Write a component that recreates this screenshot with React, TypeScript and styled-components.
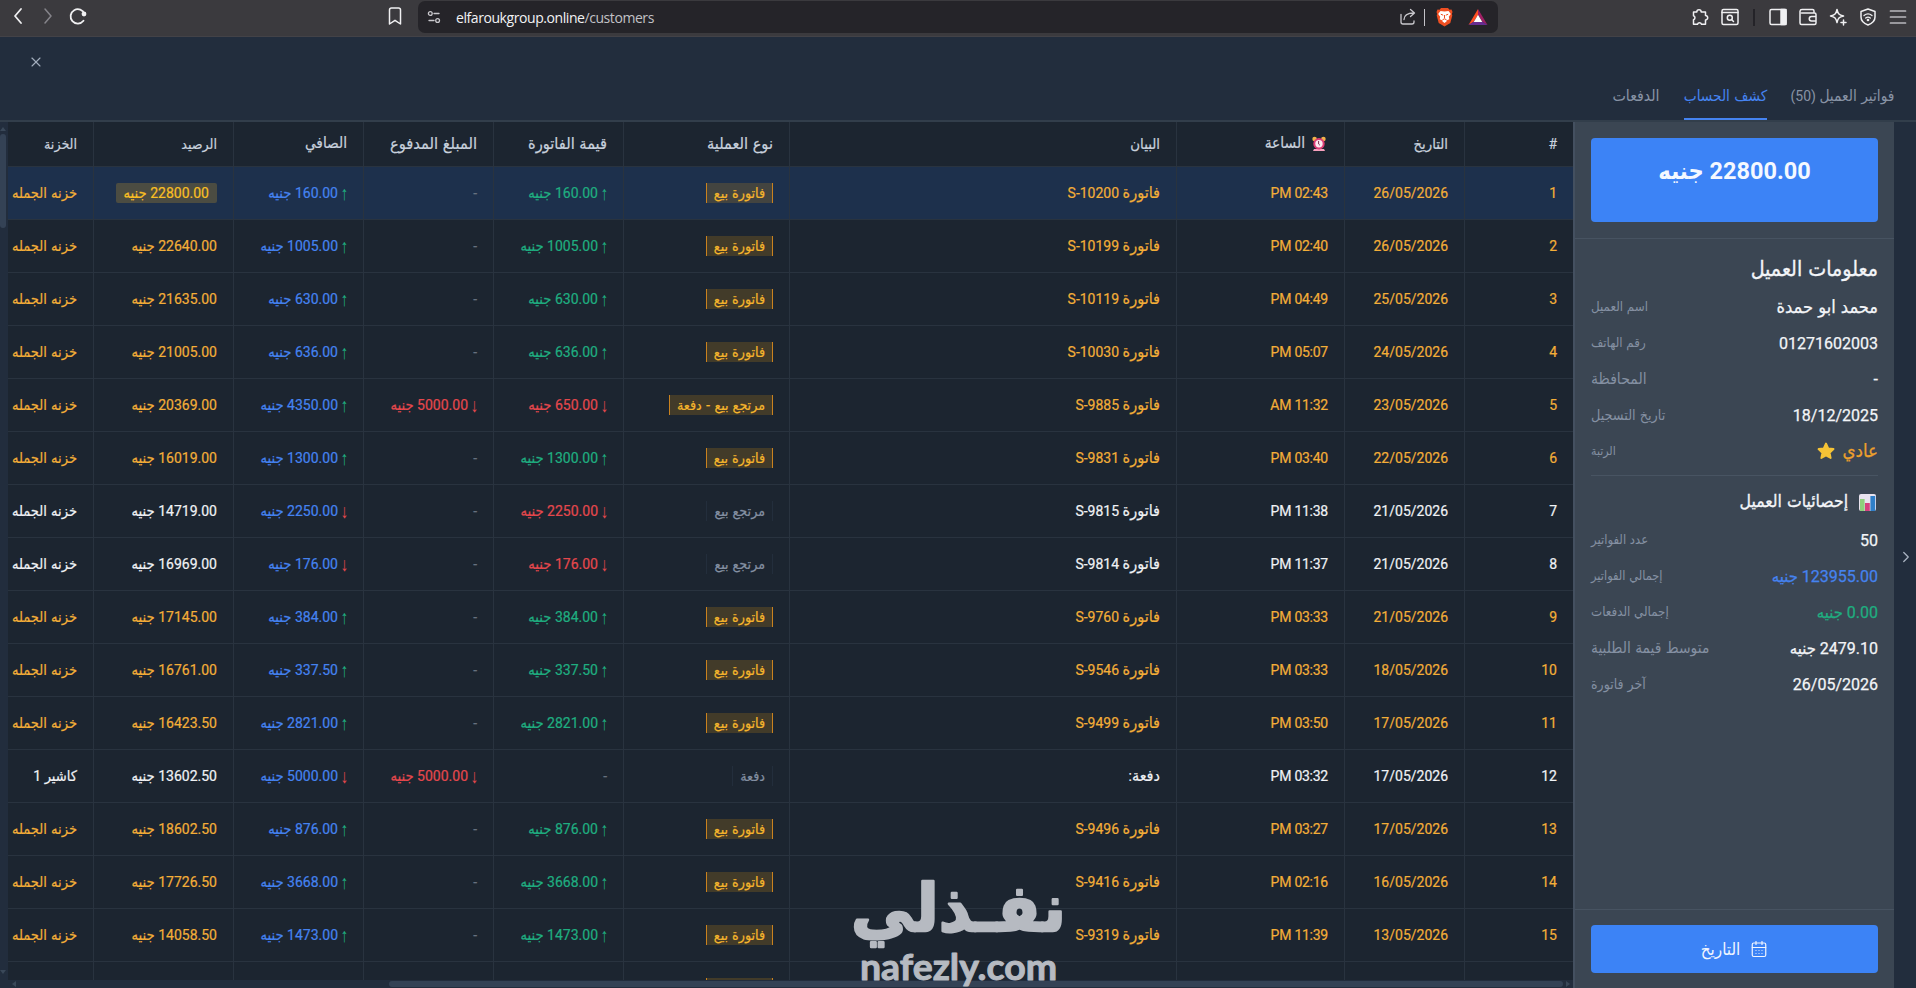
import React from "react";
import styled, { createGlobalStyle } from "styled-components";
import { ChevronRight, X, CalendarDays } from "lucide-react";

const Global = createGlobalStyle`
  * { box-sizing: border-box; }
  html, body, #root { margin: 0; height: 988px; overflow: hidden; }
  body { background: #222d3d; font-family: Roboto, "DejaVu Sans Condensed", "DejaVu Sans", sans-serif; font-size: 14px; }
`;

const Ar = styled.span<{ $k?: number }>`
  font-family: "DejaVu Sans Condensed", "DejaVu Sans", sans-serif;
  font-stretch: condensed;
  font-size: ${(p) => p.$k ?? 1.03}em;
  line-height: 1;
`;

/* Arabic runs get their own face and size, digits and Latin keep the base face. */
function T({ s, k }: { s: string; k?: number }) {
  const parts = s.split(/([\u0600-\u06ff]+(?:[ -]+[\u0600-\u06ff]+)*)/);
  return <>{parts.map((p, i) => (i % 2 ? <Ar key={i} $k={k}>{p}</Ar> : p))}</>;
}

const Page = styled.div`
  width: 1916px; height: 988px; display: flex; flex-direction: column; direction: rtl;
`;

/* ---------- browser chrome ---------- */
const Bar = styled.div`
  direction: ltr; height: 37px; flex: none; background: #3b3a3e; border-bottom: 1px solid #434247;
  display: grid; grid-template-columns: 418px 1080px 1fr; color: #f0f0f2;
`;
const NavGroup = styled.div`
  display: flex; align-items: center; gap: 10px; padding: 0 13px 3px 8px; height: 34px;
  svg:last-child { margin-left: auto; }
`;
const UrlBox = styled.div`
  height: 32px; margin-top: 1px; border-radius: 7px; background: #252429; display: flex; align-items: center;
  padding: 0 10px 0 9px;
`;
const Url = styled.div`
  font: 14px "Open Sans", "Noto Sans", sans-serif; letter-spacing: -0.43px; margin-left: 15px; flex: 1; color: #f2f2f4;
  span { color: #c2c1c6; }
`;
const Sep = styled.i<{ $c: string; $m: string; $w?: number }>`
  width: ${(p) => p.$w ?? 2}px; height: 17px; background: ${(p) => p.$c}; margin: ${(p) => p.$m};
`;
const ToolGroup = styled.div`
  display: flex; align-items: center; justify-content: flex-end; height: 34px; gap: 12px; padding-right: 9px;
`;

/* ---------- modal header ---------- */
const Head = styled.header`
  height: 85px; flex: none; border-bottom: 2px solid #323e4b; background: #222d3d;
  display: flex; flex-direction: column; justify-content: space-between;
`;
const CloseRow = styled.div`
  display: flex; justify-content: flex-end; padding: 17px 28px 0; color: #a3aebd; height: 34px;
`;
const Tabs = styled.nav`
  display: flex; gap: 24px; padding-right: 22px;
`;
const Tab = styled.div<{ $w: number; $on?: boolean }>`
  width: ${(p) => p.$w}px; height: 46px; line-height: 44px; white-space: nowrap;
  display: flex; justify-content: center;
  color: ${(p) => (p.$on ? "#4583f0" : "#8893a5")}; border-bottom: 2px solid ${(p) => (p.$on ? "#4583f0" : "transparent")};
`;

/* ---------- body ---------- */
const Body = styled.div`
  flex: 1; min-height: 0; display: flex; background: #222d3d;
`;
const Rail = styled.div`
  width: 22px; flex: none; display: flex; align-items: center; justify-content: center; color: #a9b3c1; padding: 4px 0 0 2px;
`;
const Side = styled.aside`
  width: 321px; flex: none; background: #3b4653; border-left: 2px solid #445060; display: flex; flex-direction: column;
`;
const AmountWrap = styled.div`
  height: 117px; padding: 16px 16px 0; border-bottom: 1px solid #475361; flex: none;
`;
const Amount = styled.div`
  height: 84px; border-radius: 4px; background: #3c83f6; color: #f4f8ff; font-size: 23.5px; font-weight: 700;
  text-align: center; line-height: 66px;
`;
const Info = styled.div`
  flex: 1; padding: 10px 16px 0; color: #f3f5f8;
`;
const Title = styled.h3<{ $s: number }>`
  margin: 0; height: 40px; display: flex; align-items: center; gap: 11px; font-size: ${(p) => p.$s}px; font-weight: 400;
  -webkit-text-stroke: 0.3px currentColor; white-space: nowrap;
`;
const InfoRow = styled.div`
  height: 36px; display: flex; align-items: center; justify-content: space-between; white-space: nowrap;
`;
const Val = styled.span<{ $c?: string }>`
  font-size: 16px; color: ${(p) => p.$c ?? "#f3f5f8"}; display: flex; align-items: center; gap: 7px; white-space: pre;
  -webkit-text-stroke: 0.25px currentColor;
`;
const Lab = styled.span<{ $s: number }>`
  font-size: ${(p) => p.$s}px; color: #8490a2;
`;
const Rule = styled.div`
  height: 1px; background: #485462; margin: 6px 0 6px;
`;
const Foot = styled.div`
  height: 79px; border-top: 1px solid #475361; padding: 15px 16px 0; flex: none;
`;
const DateButton = styled.button`
  width: 100%; height: 48px; border: 0; border-radius: 4px; background: #3c83f6; color: #f1f6ff; font: 16px Roboto, sans-serif;
  display: flex; align-items: center; justify-content: center; gap: 10px; padding: 0;
`;

const Main = styled.main`
  flex: 1; min-width: 0; display: grid; grid-template-columns: 1fr 8px; grid-template-rows: 858px 8px;
`;
const Sheet = styled.div`
  background: #1c2530; overflow: hidden; min-height: 0; height: 858px;
`;
const Row = styled.div<{ $head?: boolean; $hi?: boolean; $c?: string }>`
  display: grid; grid-template-columns: 109px 120px 168px 387px 166px 130px 130px 130px 140px 86px;
  height: ${(p) => (p.$head ? 45 : 53)}px;
  background: ${(p) => (p.$hi ? "#1d304c" : "transparent")};
  color: ${(p) => (p.$head ? "#c8d1dd" : p.$c)};
  -webkit-text-stroke: 0.2px currentColor;
`;
const Cell = styled.div<{ $ls?: number }>`
  display: flex; align-items: center; padding: 0 16px 0 0; white-space: pre; overflow: hidden;
  letter-spacing: ${(p) => p.$ls ?? 0}px;
  border-bottom: 1px solid #29333f; border-left: 1px solid #29333f;
  &:last-child { border-left: 0; }
`;
const Tag = styled.span<{ $plain?: boolean; $w?: number }>`
  height: 20px; line-height: 23px; padding: 0 7px; font-size: 12px; flex: none;
  width: ${(p) => (p.$w ? p.$w + "px" : "auto")};
  border: solid ${(p) => (p.$plain ? "#232e3c" : "#c9821f")}; border-width: 0 1px;
  background: ${(p) => (p.$plain ? "transparent" : "rgba(245,158,11,0.18)")};
  color: ${(p) => (p.$plain ? "#8490a2" : "#f5b52c")};
`;
const Money = styled.span<{ $c: string }>`
  color: ${(p) => p.$c}; display: flex; align-items: baseline;
`;
const Arrow = styled.span<{ $up?: boolean }>`
  font: 14px "Liberation Sans", sans-serif; color: ${(p) => (p.$up ? "#1fae80" : "#e5484d")}; margin-left: 4px; width: 5px;
  display: inline-flex; justify-content: center; transform: scale(1.1, 1.4); -webkit-text-stroke: 0;
`;
const Mark = styled.span`
  height: 20px; line-height: 20px; padding: 0 8px; border-radius: 2px; background: #4b4c42; color: #f9bf24;
`;
const VScroll = styled.div`
  padding: 4px 0 5px; display: flex; flex-direction: column; align-items: flex-end; justify-content: space-between;
  svg { display: block; }
`;
const VTop = styled.div`
  display: flex; flex-direction: column; gap: 2px; align-items: flex-end;
`;
const VThumb = styled.div`
  width: 6px; height: 94px; border-radius: 3px; background: #344255;
`;
const HScroll = styled.div`
  grid-column: 1 / -1; display: flex; padding: 1px 2px 0 11px; align-items: flex-start;
`;
const HThumb = styled.div`
  width: 1174px; height: 6px; border-radius: 3px; background: #344255; margin-right: 2px;
`;
const Spacer = styled.div`flex: 1;`;
const Watermark = styled.div`
  position: absolute; left: 850px; top: 872px; direction: ltr;
  svg { overflow: visible; display: block; }
`;

const G = "#1fae80", R = "#e5484d", B = "#4583f0", A = "#f3ae38", W = "#f0f2f5";
type Entry = [string, string, string, string, string, string, string, string];
const rows: Entry[] = [
  ["26/05/2026", "02:43 PM", "فاتورة S-10200", "فاتورة بيع", "+160.00", "", "+160.00", "22800.00"],
  ["26/05/2026", "02:40 PM", "فاتورة S-10199", "فاتورة بيع", "+1005.00", "", "+1005.00", "22640.00"],
  ["25/05/2026", "04:49 PM", "فاتورة S-10119", "فاتورة بيع", "+630.00", "", "+630.00", "21635.00"],
  ["24/05/2026", "05:07 PM", "فاتورة S-10030", "فاتورة بيع", "+636.00", "", "+636.00", "21005.00"],
  ["23/05/2026", "11:32 AM", "فاتورة S-9885", "مرتجع بيع - دفعة", "-650.00", "-5000.00", "+4350.00", "20369.00"],
  ["22/05/2026", "03:40 PM", "فاتورة S-9831", "فاتورة بيع", "+1300.00", "", "+1300.00", "16019.00"],
  ["21/05/2026", "11:38 PM", "فاتورة S-9815", "مرتجع بيع", "-2250.00", "", "-2250.00", "14719.00"],
  ["21/05/2026", "11:37 PM", "فاتورة S-9814", "مرتجع بيع", "-176.00", "", "-176.00", "16969.00"],
  ["21/05/2026", "03:33 PM", "فاتورة S-9760", "فاتورة بيع", "+384.00", "", "+384.00", "17145.00"],
  ["18/05/2026", "03:33 PM", "فاتورة S-9546", "فاتورة بيع", "+337.50", "", "+337.50", "16761.00"],
  ["17/05/2026", "03:50 PM", "فاتورة S-9499", "فاتورة بيع", "+2821.00", "", "+2821.00", "16423.50"],
  ["17/05/2026", "03:32 PM", "دفعة:", "دفعة", "", "-5000.00", "-5000.00", "13602.50"],
  ["17/05/2026", "03:27 PM", "فاتورة S-9496", "فاتورة بيع", "+876.00", "", "+876.00", "18602.50"],
  ["16/05/2026", "02:16 PM", "فاتورة S-9416", "فاتورة بيع", "+3668.00", "", "+3668.00", "17726.50"],
  ["13/05/2026", "11:39 PM", "فاتورة S-9319", "فاتورة بيع", "+1473.00", "", "+1473.00", "14058.50"],
];

function Amt({ v, c }: { v: string; c?: string }) {
  if (!v) return <Money $c="#66717f">-</Money>;
  const up = v[0] === "+";
  return (
    <Money $c={c ?? (up ? G : R)}>
      <Arrow $up={up}>{up ? "↑" : "↓"}</Arrow>
      <span><T s={v.slice(1) + " جنيه"} k={1.05} /></span>
    </Money>
  );
}

const ClockSvg = styled.svg`margin: 0 2px 0 7px;`;
const Clock = () => (
  <ClockSvg width="14" height="16" viewBox="0 0 14 16">
    <circle cx="2.6" cy="3" r="2.3" fill="#f3b24a" /><circle cx="11.4" cy="3" r="2.3" fill="#f3b24a" />
    <path d="M2 13h10l1 2H1z" fill="#f7a1bd" />
    <circle cx="7" cy="7.7" r="5.7" fill="#dd3d75" /><circle cx="7" cy="7.7" r="3.7" fill="#fbe9f0" />
    <path d="M6.6 5v3l1.3 1.2" stroke="#7c3350" fill="none" />
  </ClockSvg>
);
const ChartSvg = styled.svg`margin-right: 2px;`;
const Chart = () => (
  <ChartSvg width="17" height="17" viewBox="0 0 17 17">
    <rect width="17" height="17" rx="2" fill="#e9e3ef" />
    <rect x="1" y="5" width="4.6" height="12" fill="#8ed07b" /><rect x="6" y="9" width="4.8" height="8" fill="#d6407f" />
    <rect x="11.4" y="2" width="4.8" height="15" fill="#2f7fc8" />
  </ChartSvg>
);
const Star = () => (
  <svg width="18" height="18" viewBox="0 0 24 24">
    <path d="M12 2l3 6.500 7 .9-5.200 4.900 1.400 7L12 17.900 5.800 21.300l1.400-7L2 9.400l7-.9z" fill="#f5c336" stroke="#f5c336" strokeWidth="2.500" strokeLinejoin="round" />
  </svg>
);
const Tri = ({ d }: { d: string }) => (
  <svg width="6" height="6" viewBox="0 0 6 6"><path d={d} fill="#3a4859" /></svg>
);
const line = { fill: "none", stroke: "currentColor", strokeWidth: 1.5, strokeLinecap: "round", strokeLinejoin: "round" } as const;

export default function App() {
  return (
    <Page>
      <Global />
      <Bar>
        <NavGroup>
          <svg width="20" height="20" viewBox="0 0 20 20" {...line} strokeWidth={1.8}><path d="M13 3L7 10l6 7" /></svg>
          <svg width="20" height="20" viewBox="0 0 20 20" {...line} stroke="#85848a"><path d="M7 3l6 7-6 7" /></svg>
          <svg width="20" height="20" viewBox="0 0 20 20" {...line} strokeWidth={1.8}><path d="M15.500 14.800A7.200 7.200 0 1 1 16.600 8" /><circle cx="16" cy="8" r="1.500" fill="currentColor" /></svg>
          <svg width="20" height="20" viewBox="0 0 20 20" {...line}><path d="M4.500 4a2 2 0 0 1 2-2h7a2 2 0 0 1 2 2v14L10 14.300 4.500 18z" /></svg>
        </NavGroup>
        <UrlBox>
          <svg width="14" height="14" viewBox="0 0 14 14" {...line} stroke="#c9c8cd" strokeWidth={1.300}><circle cx="3.300" cy="3.500" r="1.900" /><path d="M7 3.500h5M2 10.500h5" /><circle cx="10.600" cy="10.500" r="1.900" /></svg>
          <Url>elfaroukgroup.online<span>/customers</span></Url>
          <svg width="18" height="18" viewBox="0 0 18 18" {...line} stroke="#c9c8cd" strokeWidth={1.300}><path d="M2 6.500V14a2 2 0 0 0 2 2h9a2 2 0 0 0 2-2v-1M5 11.500c0-4 3-6.500 10-6.500M11.500 1.500L15.500 5 11.500 8.500" /></svg>
          <Sep $c="#c4c3c8" $w={1} $m="0 11px 0 7px" />
          <svg width="17" height="20" viewBox="0 0 17 20">
            <path d="M5 1h7l1.500 1.700 2-.2 1 2.500-.7 2 .5 1.500-2 7.500L8.500 19.500 2.700 16 .7 8.500l.5-1.500-.7-2 1-2.500 2 .2z" fill="#ee4f22" />
            <path d="M8.500 4.500l4-.6 2.300 3-2 2.800.5 2.500-2.800 1.400v1L8.500 16 6.500 14.600v-1l-2.800-1.400.5-2.500-2-2.800 2.300-3z" fill="#fff" />
            <path d="M4.800 7.200l2.400 1M12.200 7.200l-2.400 1M8.500 8v3.200M6.500 12.800l2-1 2 1" stroke="#ee4f22" fill="none" />
          </svg>
          <svg width="35" height="18" viewBox="-15 0 35 18">
            <path d="M10 1v6L5.500 14 .5 17z" fill="#ff4f22" /><path d="M10 1l9.500 16-5-3L10 7z" fill="#9e1f63" /><path d="M.5 17h19l-5-3.200h-9z" fill="#662d91" /><path d="M10 6.800l4.300 7.200H5.700z" fill="#fff" />
          </svg>
        </UrlBox>
        <ToolGroup>
          <svg width="18" height="18" viewBox="0 0 18 18" {...line}><path d="M2.500 4h3.300a2.200 2.200 0 1 1 4.400 0h4.300v3.500a2.200 2.200 0 1 1 0 4.400v4.300H10.500a2.100 2.100 0 0 0-4 0h-4v-4.500a2.100 2.100 0 0 0 0-4z" /></svg>
          <svg width="18" height="18" viewBox="0 0 18 18" {...line}><rect x="1" y="1.500" width="16" height="15" rx="1.500" /><path d="M1 4.500h16" /><circle cx="8.800" cy="9.800" r="2.500" /><path d="M10.800 11.800l1.700 1.700" /></svg>
          <Sep $c="#242328" $m="0 2px" />
          <svg width="18" height="18" viewBox="0 0 18 18" {...line}><rect x="1" y="1.500" width="16" height="15" rx="1.500" /><path d="M12 1.500h5v15h-5z" fill="currentColor" /></svg>
          <svg width="18" height="18" viewBox="0 0 18 18" {...line}><path d="M15 5V3a1.500 1.500 0 0 0-1.500-1.500H3A2 2 0 0 0 1 3.300V15a1.500 1.500 0 0 0 1.500 1.500h13A1.500 1.500 0 0 0 17 15V6.500A1.500 1.500 0 0 0 15.500 5H2.500M17 8.500h-4.500a2.200 2.200 0 0 0 0 4.500H17" /></svg>
          <svg width="18" height="18" viewBox="0 0 18 18" {...line}><path d="M8 1.500c1 4.500 2 5.500 6.500 6.500C10 9 9 10 8 14.500 7 10 6 9 1.500 8 6 7 7 6 8 1.500zM14.500 12v5M12 14.500h5" /></svg>
          <svg width="18" height="18" viewBox="0 0 18 18" {...line}><path d="M9 1l7 2.500V9c0 4-3 6.500-7 8-4-1.500-7-4-7-8V3.500z" /><path d="M5 7.500c2.500-2 5.500-2 8 0M6.700 10c1.500-1.200 3.100-1.200 4.600 0" strokeWidth={1.300} /><circle cx="9" cy="12" r=".6" /></svg>
          <svg width="18" height="18" viewBox="0 0 18 18" {...line} stroke="#b9b8bd" strokeWidth={1.700}><path d="M1.500 3h15M1.500 9h15M1.500 15h15" /></svg>
        </ToolGroup>
      </Bar>

      <Head>
        <CloseRow><X size={16} strokeWidth={1.700} /></CloseRow>
        <Tabs>
          <Tab $w={103}><span><T s="فواتير العميل (50)" k={1.1} /></span></Tab>
          <Tab $w={83} $on><span><T s="كشف الحساب" k={1.09} /></span></Tab>
          <Tab $w={48}><span><T s="الدفعات" k={1.13} /></span></Tab>
        </Tabs>
      </Head>

      <Body>
        <Rail><ChevronRight size={18} strokeWidth={1.700} /></Rail>
        <Side>
          <AmountWrap><Amount><T s="22800.00 جنيه" k={1} /></Amount></AmountWrap>
          <Info>
            <Title $s={18}><T s="معلومات العميل" k={1.18} /></Title>
            <InfoRow><Val><T s="محمد ابو حمدة" k={1.13} /></Val><Lab $s={12}><T s="اسم العميل" k={1.1} /></Lab></InfoRow>
            <InfoRow><Val>01271602003</Val><Lab $s={12}><T s="رقم الهاتف" k={1.1} /></Lab></InfoRow>
            <InfoRow><Val>-</Val><Lab $s={14}><T s="المحافظة" k={1.12} /></Lab></InfoRow>
            <InfoRow><Val>18/12/2025</Val><Lab $s={14}><T s="تاريخ التسجيل" k={1.02} /></Lab></InfoRow>
            <InfoRow><Val $c="#eda02c"><T s="عادي" k={1.16} /><Star /></Val><Lab $s={12}><T s="الرتبة" k={1.02} /></Lab></InfoRow>
            <Rule />
            <Title $s={16}><Chart /><T s="إحصائيات العميل" k={1.09} /></Title>
            <InfoRow><Val>50</Val><Lab $s={12}><T s="عدد الفواتير" k={1.08} /></Lab></InfoRow>
            <InfoRow><Val $c={B}><span><T s="123955.00 جنيه" /></span></Val><Lab $s={12}><T s="إجمالي الفواتير" k={1.06} /></Lab></InfoRow>
            <InfoRow><Val $c={G}><span><T s="0.00 جنيه" /></span></Val><Lab $s={12}><T s="إجمالي الدفعات" k={1.1} /></Lab></InfoRow>
            <InfoRow><Val><span><T s="2479.10 جنيه" /></span></Val><Lab $s={14}><T s="متوسط قيمة الطلبية" k={1.1} /></Lab></InfoRow>
            <InfoRow><Val>26/05/2026</Val><Lab $s={14}><T s="آخر فاتورة" k={1.0} /></Lab></InfoRow>
          </Info>
          <Foot><DateButton><CalendarDays size={18} strokeWidth={1.600} /><T s="التاريخ" k={1.06} /></DateButton></Foot>
        </Side>

        <Main>
          <Sheet>
            <Row $head>
              <Cell>#</Cell>
              <Cell><T s="التاريخ" k={1.06} /></Cell>
              <Cell><Clock /><T s="الساعة" k={1.1} /></Cell>
              <Cell><T s="البيان" k={1.06} /></Cell>
              <Cell><T s="نوع العملية" k={1.16} /></Cell>
              <Cell><T s="قيمة الفاتورة" k={1.16} /></Cell>
              <Cell><T s="المبلغ المدفوع" k={1.17} /></Cell>
              <Cell><T s="الصافي" k={1.09} /></Cell>
              <Cell><T s="الرصيد" k={1.01} /></Cell>
              <Cell><T s="الخزنة" k={1.01} /></Cell>
            </Row>
            {rows.map((r, i) => {
              const plain = r[3] === "مرتجع بيع" || r[3] === "دفعة";
              const balance = <T s={r[7] + " جنيه"} k={1.05} />;
              return (
                <Row key={i} $hi={i === 0} $c={plain ? W : A}>
                  <Cell>{i + 1}</Cell>
                  <Cell>{r[0]}</Cell>
                  <Cell $ls={-0.25}>{r[1]}</Cell>
                  <Cell><span><T s={r[2]} k={1.15} /></span></Cell>
                  <Cell><Tag $plain={plain}><T s={r[3]} k={1.18} /></Tag></Cell>
                  <Cell><Amt v={r[4]} /></Cell>
                  <Cell><Amt v={r[5]} /></Cell>
                  <Cell><Amt v={r[6]} c={B} /></Cell>
                  <Cell>{i === 0 ? <Mark>{balance}</Mark> : <span>{balance}</span>}</Cell>
                  <Cell><span><T s={r[3] === "دفعة" ? "كاشير 1" : "خزنه الجمله"} k={1.04} /></span></Cell>
                </Row>
              );
            })}
            <Row $c={A}>
              {Array.from({ length: 10 }, (_, i) => <Cell key={i}>{i === 4 && <Tag $w={67} />}</Cell>)}
            </Row>
          </Sheet>
          <VScroll>
            <VTop><Tri d="M3 1l3 4H0z" /><VThumb /></VTop>
            <Tri d="M3 5L0 1h6z" />
          </VScroll>
          <HScroll><Tri d="M5 3L1 0v6z" /><HThumb /><Spacer /><Tri d="M1 3l4-3v6z" /></HScroll>
        </Main>
      </Body>

      <Watermark>
        <svg width="220" height="116" viewBox="0 0 220 116" fill="#b6bac1" stroke="#b6bac1" strokeLinejoin="round">
          <text x="1" y="59" textLength="215" lengthAdjust="spacingAndGlyphs" fontFamily="DejaVu Sans" fontWeight="700" fontSize="66" strokeWidth="2.500">نفـذلي</text>
          <text x="10" y="108" textLength="197" lengthAdjust="spacingAndGlyphs" fontFamily="Lato" fontWeight="700" fontSize="37" strokeWidth="1">nafezly.com</text>
        </svg>
      </Watermark>
    </Page>
  );
}
